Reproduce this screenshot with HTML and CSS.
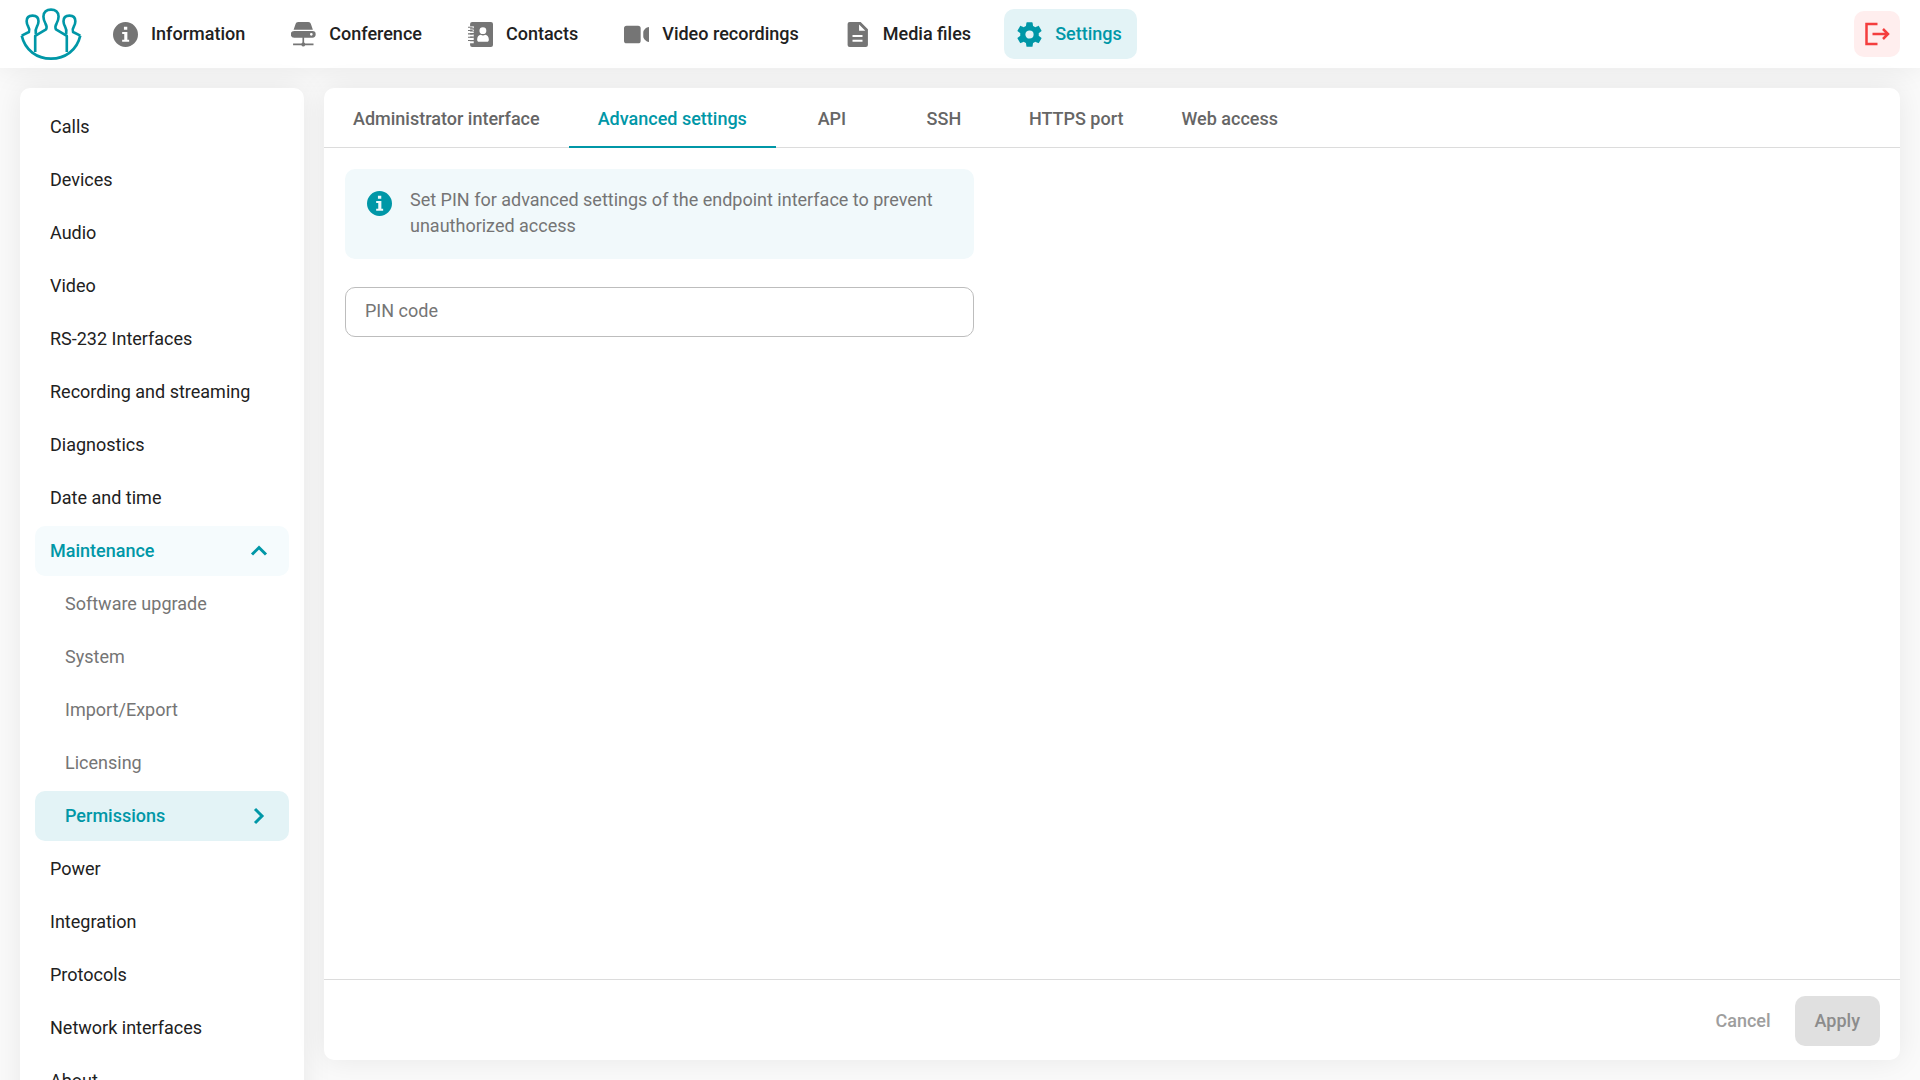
FILE: index.html
```html
<!DOCTYPE html>
<html lang="en">
  <head>
    <meta charset="UTF-8">
    <meta name="viewport" content="width=device-width">
    <title>Settings</title>
    <link rel="stylesheet" href="styles.css">
  </head>
  <body>
    <header class="header">
      <a href="#" class="logo" aria-label="Home">
        <svg viewBox="58 22 186 158" width="62" height="52">
          <path d="M103 156V107L136 87Q140 79 134 69Q128 58 128 48C128 34 138 27 151 27S174 34 174 48Q174 58 168 69Q162 79 166 87L199 107V156"/>
          <path d="M62 106L84 95Q87 87 82 79Q77 70 77 62C77 50 85 45 95 45S113 50 113 62Q113 70 108 79Q103 87 105 101"/>
          <path d="M240 106L218 95Q215 87 220 79Q225 70 225 62C225 50 217 45 207 45S189 50 189 62Q189 70 194 79Q199 87 197 101"/>
          <path d="M62 106C72 150 108 176 151 176S230 150 240 106"/>
        </svg>
      </a>
      <nav class="nav">
        <a href="#" class="nav-item">
          <svg class="icon" viewBox="0 0 24 24"><path fill-rule="evenodd" d="M12 0a12 12 0 1 0 0 24 12 12 0 0 0 0-24zM10.5 4.5h3.2v3h-3.2zM8.800 9.500h5v7.600h1.700v1.900H8.800v-1.900h2v-5.700h-2z"/></svg>
          Information</a>
        <a href="#" class="nav-item">
          <svg class="icon" viewBox="0 0 24 24"><path fill-rule="evenodd" d="M7 0h9.500c1.500 0 2.200.8 2.600 2L21 7.500H2.500L4.400 2C4.800.8 5.500 0 7 0zM3 8.600h17.500a3.200 3.200 0 0 1 0 6.400H3a3.200 3.200 0 0 1 0-6.400zM19.500 10.500a1.300 1.300 0 1 0 0 2.600 1.300 1.300 0 0 0 0-2.600zM11 15h1.600v4.700a2 2 0 0 1 1 1h8v1.700h-8a2 2 0 0 1-3.600 0H2v-1.700h8a2 2 0 0 1 1-1z"/></svg>
          Conference</a>
        <a href="#" class="nav-item">
          <svg class="icon" viewBox="0 0 24 24"><path fill-rule="evenodd" d="M4 0h18a2 2 0 0 1 2 2v20a2 2 0 0 1-2 2H4a2 2 0 0 1-2-2v-1.500h3.500v-2H2v-1.300h3.500v-2H2v-1.300h3.500v-2H2v-1.300h3.500v-2H2V9.200h3.500v-2H2V6h3.500V4H2V2a2 2 0 0 1 2-2zM14.300 5a3.300 3.300 0 1 0 0 6.600 3.300 3.300 0 0 0 0-6.600zM12.300 12.300c-2.200.5-3.500 2-3.500 4.500 0 1.500.5 2.200 2 2.200h7.200c1.500 0 2-.7 2-2.200 0-2.500-1.300-4-3.500-4.500-1.200.8-3 .8-4.200 0z"/><path d="M0 4.500h4.500v1H0zM0 7.700h4.500v1H0zM0 10.900h4.500v1H0zM0 14.100h4.500v1H0zM0 17.300h4.500v1H0z"/></svg>
          Contacts</a>
        <a href="#" class="nav-item">
          <svg class="icon" viewBox="0 0 24 24"><path d="M2.500 3.500h11a2.500 2.500 0 0 1 2.500 2.500v12a2.500 2.500 0 0 1-2.500 2.500h-11A2.500 2.500 0 0 1 0 18V6a2.500 2.500 0 0 1 2.500-2.500zM24 4.800v14.400c-2.500 0-5.500-3-5.500-5.200v-4c0-2.200 3-5.200 5.500-5.200z"/></svg>
          Video recordings</a>
        <a href="#" class="nav-item">
          <svg class="icon" viewBox="0 0 24 24"><path fill-rule="evenodd" d="M4.500 0H15l7 7v15a2 2 0 0 1-2 2H4.500a2 2 0 0 1-2-2V2a2 2 0 0 1 2-2zM13.500 2.500v6h6zM7.200 12.500v2h9.600v-2zM7.200 17v2h9.600v-2z"/></svg>
          Media files</a>
        <a href="#" class="nav-item active" aria-current="page">
          <svg class="icon" viewBox="2.300 2.300 19.400 19.400"><path d="M19.140 12.940c.04-.3.060-.61.060-.94 0-.32-.02-.64-.07-.94l2.030-1.580c.18-.14.230-.41.120-.61l-1.920-3.320c-.12-.22-.37-.29-.59-.22l-2.390.96c-.5-.38-1.030-.7-1.620-.94l-.36-2.540c-.04-.24-.24-.41-.48-.41h-3.840c-.24 0-.43.17-.47.41l-.36 2.540c-.59.24-1.130.57-1.620.94l-2.390-.96c-.22-.08-.47 0-.59.22L2.740 8.870c-.12.21-.08.47.12.610l2.030 1.580c-.05.3-.09.63-.09.94s.02.64.070.94l-2.030 1.580c-.18.14-.23.41-.12.610l1.920 3.320c.12.220.37.290.59.220l2.390-.96c.5.380 1.030.700 1.620.940l.36 2.540c.05.240.24.410.48.410h3.840c.24 0 .44-.17.470-.41l.36-2.540c.59-.24 1.130-.56 1.620-.94l2.390.96c.22.080.47 0 .59-.22l1.920-3.320c.12-.22.070-.47-.12-.61l-2.010-1.580zM12 15.200a3.200 3.200 0 1 1 0-6.400 3.200 3.200 0 0 1 0 6.400z"/></svg>
          Settings</a>
      </nav>
      <button class="logout" aria-label="Log out">
        <svg viewBox="0 0 25 25" width="25" height="25"><path d="M12.500 2H1.500v20h11M7.500 12h15M18 7l5 5-5 5"/></svg>
      </button>
    </header>
    <div class="layout">
      <nav class="sidebar" aria-label="Settings">
        <a href="#" class="side-item">Calls</a>
        <a href="#" class="side-item">Devices</a>
        <a href="#" class="side-item">Audio</a>
        <a href="#" class="side-item">Video</a>
        <a href="#" class="side-item">RS-232 Interfaces</a>
        <a href="#" class="side-item">Recording and streaming</a>
        <a href="#" class="side-item">Diagnostics</a>
        <a href="#" class="side-item">Date and time</a>
        <a href="#" class="side-item open">Maintenance
          <svg class="arrow" viewBox="0 0 20 20"><path d="M3 13.500l7-7 7 7"/></svg></a>
        <a href="#" class="side-item sub">Software upgrade</a>
        <a href="#" class="side-item sub">System</a>
        <a href="#" class="side-item sub">Import/Export</a>
        <a href="#" class="side-item sub">Licensing</a>
        <a href="#" class="side-item sub active" aria-current="page">Permissions
          <svg class="arrow" viewBox="0 0 20 20"><path d="M6 3l7 7-7 7"/></svg></a>
        <a href="#" class="side-item">Power</a>
        <a href="#" class="side-item">Integration</a>
        <a href="#" class="side-item">Protocols</a>
        <a href="#" class="side-item">Network interfaces</a>
        <a href="#" class="side-item">About</a>
      </nav>
      <main class="panel">
        <div class="tabs" role="tablist">
          <button class="tab" role="tab">Administrator interface</button>
          <button class="tab active" role="tab" aria-selected="true">Advanced settings</button>
          <button class="tab" role="tab">API</button>
          <button class="tab" role="tab">SSH</button>
          <button class="tab" role="tab">HTTPS port</button>
          <button class="tab" role="tab">Web access</button>
        </div>
        <form class="form" id="pin-form">
          <div class="notice">
            <svg class="icon" viewBox="0 0 24 24"><path fill-rule="evenodd" d="M12 0a12 12 0 1 0 0 24 12 12 0 0 0 0-24zM10.500 4.500h3.200v3h-3.200zM8.800 9.500h5v7.600h1.700v1.900H8.800v-1.900h2v-5.700h-2z"/></svg>
            <p>Set PIN for advanced settings of the endpoint interface to prevent unauthorized access</p>
          </div>
          <input class="field" type="text" placeholder="PIN code" aria-label="PIN code">
        </form>
        <footer class="actions">
          <button class="btn" type="reset" form="pin-form" disabled>Cancel</button>
          <button class="btn apply" type="submit" form="pin-form" disabled>Apply</button>
        </footer>
      </main>
    </div>
  </body>
</html>
```
FILE: styles.css
```css
* {box-sizing: border-box;}
body {color: #212121; background: #fafafa; font: 18px/26px Roboto, sans-serif;
  height: 100vh; margin: 0; display: flex; flex-flow: column; overflow: hidden;}
a {color: inherit; text-decoration: none;}
button, input {font: inherit;}
button {border: 0; background: none; cursor: pointer;}
button:disabled {cursor: default;}
p {margin: 0;}
.header {background: #fff; height: 68px; padding: 0 20px; flex: none;
  display: flex; align-items: center; box-shadow: 0 0 30px #00000014;}
.logo {display: flex;}
.logo svg {fill: none; stroke: #0097a7; stroke-width: 8; stroke-linejoin: round;}
.nav {display: flex; gap: 18px; margin-left: 18px;}
.nav-item {font-weight: 500; height: 50px; padding: 0 15px 0 13px;
  border-radius: 10px; display: flex; align-items: center; gap: 13px;}
.icon {width: 25px; height: 25px; fill: #757575; flex: none;}
.active {color: #0097a7;}
.active .icon {fill: #0097a7;}
.nav-item.active, .side-item.active {background: #e3f3f6;}
.logout {width: 46px; height: 46px; padding: 0; margin-left: auto;
  background: #ffeeee; border-radius: 10px;
  display: flex; align-items: center; justify-content: center;}
.logout svg {fill: none; stroke: #f43e3e; stroke-width: 2.5;}
.layout {flex: 1; min-height: 0; padding: 20px 20px 0;
  display: flex; gap: 20px;}
.sidebar, .panel {background: #fff; border-radius: 10px;
  box-shadow: 0 0 30px #00000014;}
.sidebar {width: 284px; padding: 14px 15px; flex: none; align-self: flex-start;
  display: flex; flex-flow: column; gap: 3px;}
.side-item {height: 50px; padding: 0 20px 0 15px; flex: none;
  border-radius: 10px; display: flex; align-items: center;
  justify-content: space-between;}
.sub {color: #757575; padding-left: 30px;}
.open, .side-item.active {color: #0097a7; font-weight: 500;}
.open {background: #f5fbfd;}
.arrow {width: 20px; height: 20px; fill: none; stroke: #0097a7;
  stroke-width: 3;}
.panel {flex: 1; min-width: 0; margin-bottom: 20px;
  display: flex; flex-flow: column;}
.tabs {height: 60px; border-bottom: 1px solid #dcdcdc; display: flex;}
.tab {color: #666; font-weight: 500; min-width: 112px; padding: 3px 29px 0;
  border-bottom: 2px solid #0000; margin-bottom: -1px;}
.tab.active {color: #0097a7; border-color: #0097a7;}
.form {flex: 1; padding: 21px;}
.notice, .field {width: 41%; border-radius: 10px;}
.notice {color: #757575; background: #f1f9fb; min-height: 90px;
  padding: 18px 22px; margin-bottom: 28px; display: flex; gap: 18px;}
.notice .icon {fill: #0097a7; margin-top: 4px;}
.field {height: 50px; padding: 0 19px 3px; border: 1px solid #bdbdbd;
  outline: 0; display: block;}
.field::placeholder {color: #757575; opacity: 1;}
.field:focus {border-color: #0097a7;}
.actions {height: 81px; padding: 2px 20px 0; border-top: 1px solid #dcdcdc;
  display: flex; align-items: center; justify-content: flex-end; gap: 4px;}
.btn {color: #9e9e9e; font-weight: 500; height: 50px; padding: 0 20px;
  border-radius: 10px;}
.apply {color: #8c8c8c; background: #e0e0e0;}
```
